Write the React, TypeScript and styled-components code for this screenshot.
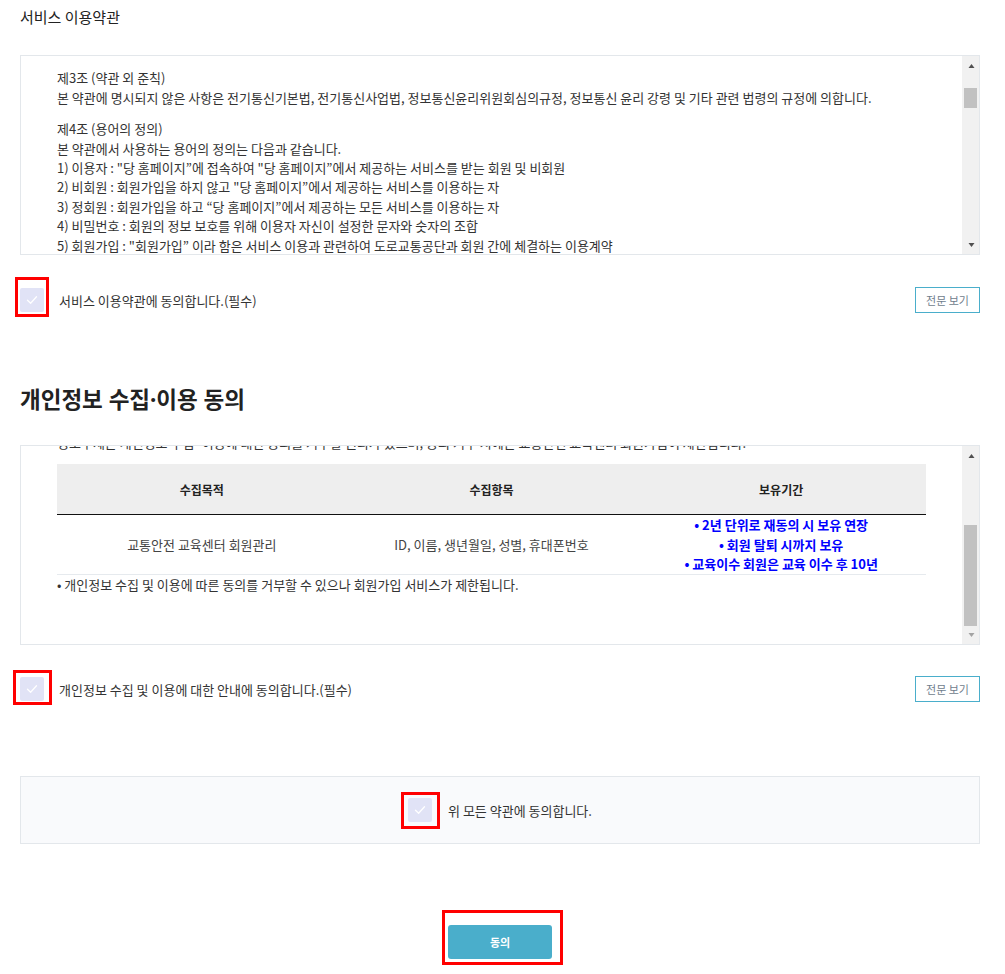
import React, { useLayoutEffect, useRef, useState } from "react";
import styled, { createGlobalStyle } from "styled-components";

const GlobalStyle = createGlobalStyle`
  html, body { margin: 0; padding: 0; background: #ffffff; }
  body {
    font-family: "Noto Sans CJK KR", "Noto Sans", sans-serif;
    color: #333333;
  }
`;

const Page = styled.main`
  width: 960px;
  padding: 5px 20px 20px;
  display: flex;
  flex-direction: column;
`;

const SectionTitle = styled.h2<{ $large?: boolean; $gap?: number }>`
  margin: ${(p) => p.$gap ?? 0}px 0 0;
  font-family: ${(p) => (p.$large ? '"Noto Sans", "Noto Sans CJK KR", sans-serif' : "inherit")};
  font-size: ${(p) => (p.$large ? "22.5px" : "15px")};
  font-weight: ${(p) => (p.$large ? 700 : 400)};
  line-height: ${(p) => (p.$large ? "30px" : "24px")};
  color: #222222;
`;

/* ---------- scroll panel with a drawn classic scrollbar ---------- */

const Frame = styled.div<{ $gap: number }>`
  margin-top: ${(p) => p.$gap}px;
  height: 200px;
  box-sizing: border-box;
  border: 1px solid #e3e7eb;
  display: flex;
`;

const Viewport = styled.div<{ $padBottom: number }>`
  flex: 1;
  min-width: 0;
  overflow: hidden;
  position: relative;
  padding: 12px 36px ${(p) => p.$padBottom}px;
  font-size: 13px;
  line-height: 19.4px;
  color: #333333;
`;

const Rail = styled.div`
  width: 17px;
  flex: none;
  background: #f1f1f1;
  display: flex;
  flex-direction: column;
`;

const RailButton = styled.div<{ $down?: boolean; $disabled?: boolean }>`
  height: 17px;
  flex: none;
  display: flex;
  align-items: center;
  justify-content: center;

  &::after {
    content: "";
    width: 0;
    height: 0;
    border-left: 3.5px solid transparent;
    border-right: 3.5px solid transparent;
    ${(p) => (p.$down ? "border-top" : "border-bottom")}: 4px solid ${(p) => (p.$disabled ? "#a3a3a3" : "#505050")};
    transform: translate(0.5px, ${(p) => (p.$down ? "-1px" : "1px")});
  }
`;

const Track = styled.div`
  flex: 1;
  position: relative;
`;

const Thumb = styled.div`
  position: absolute;
  left: 2px;
  right: 2px;
  background: #c1c1c1;
`;

type ThumbGeom = { top: number; height: number; atEnd: boolean };

const ScrollPanel: React.FC<{
  gap: number;
  padBottom: number;
  anchor: React.RefObject<HTMLElement | null>;
  anchorOffset: number;
  children: React.ReactNode;
}> = ({ gap, padBottom, anchor, anchorOffset, children }) => {
  const viewRef = useRef<HTMLDivElement>(null);
  const trackRef = useRef<HTMLDivElement>(null);
  const [thumb, setThumb] = useState<ThumbGeom>({ top: 0, height: 17, atEnd: false });

  useLayoutEffect(() => {
    const v = viewRef.current;
    const t = trackRef.current;
    if (!v || !t) return;
    if (anchor.current) v.scrollTop = anchor.current.offsetTop - anchorOffset;
    const track = t.clientHeight;
    const max = v.scrollHeight - v.clientHeight;
    const h = Math.max(17, Math.round((track * v.clientHeight) / v.scrollHeight));
    const top = max > 0 ? Math.round(((track - h) * v.scrollTop) / max) : 0;
    setThumb({ top, height: h, atEnd: v.scrollTop >= max - 1 });
  }, [anchor, anchorOffset]);

  return (
    <Frame $gap={gap}>
      <Viewport ref={viewRef} $padBottom={padBottom}>
        {children}
      </Viewport>
      <Rail>
        <RailButton />
        <Track ref={trackRef}>
          <Thumb style={{ top: thumb.top, height: thumb.height }} />
        </Track>
        <RailButton $down $disabled={thumb.atEnd} />
      </Rail>
    </Frame>
  );
};

/* ---------- content ---------- */

const Para = styled.p`
  margin: 0 0 12px;
`;

const Line = styled.span`
  display: block;
`;

const AgreeRow = styled.div<{ $gap: number }>`
  margin-top: ${(p) => p.$gap}px;
  height: 26px;
  display: flex;
  align-items: center;
  justify-content: space-between;
`;

const CheckGroup = styled.label`
  display: flex;
  align-items: center;
  gap: 15px;
  font-size: 13px;
  color: #333333;
  cursor: pointer;
`;

const CheckBox = styled.span`
  position: relative;
  width: 24px;
  height: 24px;
  border-radius: 2px;
  background: #e1e3f6;
  display: flex;
  align-items: center;
  justify-content: center;
  flex: none;
`;

const Highlight = styled.span<{ $t: number; $r: number; $b: number; $l: number }>`
  position: absolute;
  top: ${(p) => -p.$t}px;
  right: ${(p) => -p.$r}px;
  bottom: ${(p) => -p.$b}px;
  left: ${(p) => -p.$l}px;
  border: 3px solid #ff0000;
  pointer-events: none;
`;

const ViewButton = styled.button`
  width: 65px;
  height: 26px;
  box-sizing: border-box;
  border: 1px solid #4aaecb;
  background: #ffffff;
  color: #6f7d8c;
  font-family: inherit;
  font-size: 11px;
  padding: 0;
  cursor: pointer;
`;

const Table = styled.table`
  width: 100%;
  margin-top: 12px;
  border-collapse: collapse;
  table-layout: fixed;
`;

const Th = styled.th`
  height: 50px;
  padding: 0;
  background: #eeeeee;
  border-bottom: 1px solid #111111;
  font-size: 12px;
  font-weight: 700;
  color: #222222;
  text-align: center;
`;

const Td = styled.td<{ $blue?: boolean }>`
  padding: 0;
  height: 58px;
  text-align: center;
  border-bottom: 1px solid #e6eaee;
  font-size: 13px;
  line-height: 19.4px;
  font-weight: ${(p) => (p.$blue ? 700 : 400)};
  color: ${(p) => (p.$blue ? "#0000ff" : "#444444")};
`;

const Note = styled.p`
  margin: 0;
`;

const AllAgreeBox = styled.div`
  margin-top: 74px;
  height: 68px;
  box-sizing: border-box;
  border: 1px solid #e3e7eb;
  background: #f9fafc;
  display: flex;
  align-items: center;
  justify-content: center;
`;

const AllAgreeGroup = styled(CheckGroup)`
  gap: 16px;
`;

const SubmitWrap = styled.div`
  margin-top: 81px;
  align-self: center;
  position: relative;
`;

const SubmitButton = styled.button`
  width: 104px;
  height: 34px;
  border: none;
  border-radius: 3px;
  background: #4aaecb;
  color: #ffffff;
  font-family: inherit;
  font-size: 11px;
  font-weight: 700;
  padding: 0;
  cursor: pointer;
  display: block;
`;

const Check = () => (
  <svg width="12" height="10" viewBox="0 0 12 10" fill="none">
    <path d="M1.5 5.2 L4.6 8.2 L10.5 1.8" stroke="#ffffff" strokeWidth="1.3" strokeLinecap="round" strokeLinejoin="round" />
  </svg>
);

type Inset = { t: number; r: number; b: number; l: number };

const Agree: React.FC<{ hl: Inset; children: React.ReactNode; all?: boolean }> = ({ hl, children, all }) => {
  const Group = all ? AllAgreeGroup : CheckGroup;
  return (
    <Group>
      <CheckBox>
        <Check />
        <Highlight $t={hl.t} $r={hl.r} $b={hl.b} $l={hl.l} />
      </CheckBox>
      <span>{children}</span>
    </Group>
  );
};

type Article = { title: string; lines: string[] };

const termsBefore: Article[] = [
  {
    title: "제1조 (목적)",
    lines: [
      '이 약관은 도로교통공단(이하 "공단"이라 한다)이 운영하는 교통안전 교육센터 홈페이지(이하 "당 홈페이지"라 한다)에서',
      "제공하는 서비스의 이용조건 및 절차에 관한 사항을 규정함을 목적으로 합니다.",
    ],
  },
  {
    title: "제2조 (약관의 효력 및 변경)",
    lines: [
      "1) 이 약관은 서비스 화면에 게시하거나 기타의 방법으로 이용자에게 공지함으로써 효력을 발생합니다.",
      "2) 당 홈페이지는 합리적인 사유가 발생할 경우 관련 법령에 위배되지 않는 범위 안에서 이 약관을 변경할 수 있습니다.",
    ],
  },
];

const termsAfter: Article[] = [
  {
    title: "제3조 (약관 외 준칙)",
    lines: [
      "본 약관에 명시되지 않은 사항은 전기통신기본법, 전기통신사업법, 정보통신윤리위원회심의규정, 정보통신 윤리 강령 및 기타 관련 법령의 규정에 의합니다.",
    ],
  },
  {
    title: "제4조 (용어의 정의)",
    lines: [
      "본 약관에서 사용하는 용어의 정의는 다음과 같습니다.",
      '1) 이용자 : "당 홈페이지”에 접속하여 "당 홈페이지”에서 제공하는 서비스를 받는 회원 및 비회원',
      '2) 비회원 : 회원가입을 하지 않고 "당 홈페이지”에서 제공하는 서비스를 이용하는 자',
      "3) 정회원 : 회원가입을 하고 “당 홈페이지”에서 제공하는 모든 서비스를 이용하는 자",
      "4) 비밀번호 : 회원의 정보 보호를 위해 이용자 자신이 설정한 문자와 숫자의 조합",
      '5) 회원가입 : "회원가입” 이라 함은 서비스 이용과 관련하여 도로교통공단과 회원 간에 체결하는 이용계약',
      '6) 회원탈퇴 : "회원탈퇴”라 함은 회원이 이용계약을 종료시키는 의사표시를 말합니다.',
    ],
  },
  {
    title: "제5조 (이용계약의 성립)",
    lines: [
      "1) 이용계약은 이용자의 이용신청에 대한 당 홈페이지의 승낙과 이용자의 약관 내용에 대한 동의로 성립됩니다.",
      "2) 회원가입은 이용자가 약관의 내용에 대하여 동의를 하고 회원가입신청을 한 후 당 홈페이지가 이를 승낙함으로써 성립합니다.",
    ],
  },
  {
    title: "제6조 (이용신청)",
    lines: [
      "1) 회원가입은 온라인으로 가입신청 양식에 기록하여 가입을 하여야 합니다.",
      "2) 가입신청 양식에 기재하는 모든 회원 정보는 실제 데이터인 것으로 간주하며, 실명이나 실제 정보를 입력하지 않은 회원은",
      "법적인 보호를 받을 수 없습니다.",
      "3) 타인의 명의를 도용하여 이용신청을 한 회원의 모든 ID는 삭제되며, 관계 법령에 따라 처벌을 받을 수 있습니다.",
    ],
  },
  {
    title: "제7조 (이용신청의 승낙)",
    lines: [
      "1) 당 홈페이지는 이용자가 모든 사항을 정확히 기재하여 이용신청을 하였을 경우 특별한 사정이 없는 한 승낙합니다.",
      "2) 당 홈페이지는 다음 각 호에 해당하는 경우 이용신청에 대한 승낙을 제한하거나 사후에 이용계약을 해지할 수 있습니다.",
      "가. 본인의 실명으로 신청하지 않은 경우",
      "나. 다른 사람의 명의를 사용하여 신청한 경우",
      "다. 이용신청서의 내용을 허위로 기재한 경우",
      "라. 사회의 안녕 질서 또는 미풍양속을 저해할 목적으로 신청한 경우",
    ],
  },
  {
    title: "제8조 (계약사항의 변경)",
    lines: [
      "회원은 개인정보관리를 통해 언제든지 자신의 정보를 열람하고 수정할 수 있습니다.",
      "회원은 이용신청 시 기재한 사항이 변경되었을 경우 온라인으로 수정을 해야 합니다.",
    ],
  },
  {
    title: "제9조 (회원정보 보호)",
    lines: [
      "1) 당 홈페이지는 이용자의 정보수집 시 서비스 제공에 필요한 최소한의 정보를 수집합니다.",
      "2) 제공된 개인정보는 당해 이용자의 동의 없이 목적 외의 이용이나 제3자에게 제공할 수 없습니다.",
      "3) 이용자는 언제든지 당 홈페이지가 가지고 있는 자신의 개인정보에 대해 열람 및 오류정정을 요구할 수 있습니다.",
    ],
  },
  {
    title: "제10조 (서비스의 이용시간)",
    lines: [
      "1) 서비스의 이용은 업무상 또는 기술상 특별한 지장이 없는 한 연중무휴, 1일 24시간을 원칙으로 합니다.",
      "2) 당 홈페이지는 시스템 정기점검, 증설 및 교체를 위해 서비스를 일시적으로 중단할 수 있습니다.",
    ],
  },
  {
    title: "제11조 (회원의 의무)",
    lines: [
      "1) 회원은 관계법령, 본 약관의 규정, 이용안내 및 주의사항 등 당 홈페이지가 통지하는 사항을 준수하여야 합니다.",
      "2) 회원은 ID와 비밀번호에 관한 모든 관리책임을 가지며, 이를 제3자에게 이용하게 해서는 안 됩니다.",
      "3) 회원은 자신의 ID가 부정하게 사용된 경우 즉시 당 홈페이지에 그 사실을 통보하여야 합니다.",
    ],
  },
  {
    title: "제12조 (공단의 의무)",
    lines: [
      "1) 공단은 법령과 본 약관이 금지하는 행위를 하지 않으며, 지속적이고 안정적으로 서비스를 제공하기 위해 노력합니다.",
      "2) 공단은 회원의 개인정보 보호를 위해 보안시스템을 갖추며 개인정보처리방침을 공시하고 준수합니다.",
    ],
  },
  {
    title: "제13조 (서비스 이용의 제한)",
    lines: [
      "당 홈페이지는 회원이 다음 각 호에 해당하는 행위를 하였을 경우 사전 통지 없이 서비스 이용을 제한할 수 있습니다.",
      "1) 다른 회원의 ID를 부정하게 사용하는 행위",
      "2) 공공질서 및 미풍양속에 위반되는 내용을 유포하는 행위",
      "3) 범죄적 행위에 결부된다고 판단되는 행위",
      "4) 기타 관계 법령에 위배되는 행위",
    ],
  },
  {
    title: "제14조 (게시물의 관리)",
    lines: [
      "당 홈페이지는 회원이 게시하거나 등록한 내용이 다음 각 호에 해당한다고 판단되는 경우 사전 통지 없이 삭제할 수 있습니다.",
      "1) 다른 회원 또는 제3자를 비방하거나 명예를 손상시키는 내용인 경우",
      "2) 공공질서 및 미풍양속에 위반되는 내용인 경우",
      "3) 제3자의 저작권 등 기타 권리를 침해하는 내용인 경우",
    ],
  },
  {
    title: "제15조 (계약 해지 및 이용 제한)",
    lines: [
      "1) 회원이 이용계약을 해지하고자 하는 때에는 회원 본인이 온라인을 통하여 해지 신청을 하여야 합니다.",
      "2) 회원 탈퇴 시 관련 법령 및 개인정보처리방침에 따라 보유하는 정보를 제외한 회원의 정보는 삭제됩니다.",
    ],
  },
  {
    title: "제16조 (면책조항)",
    lines: [
      "1) 공단은 천재지변 또는 이에 준하는 불가항력으로 인하여 서비스를 제공할 수 없는 경우에는 책임이 면제됩니다.",
      "2) 공단은 회원의 귀책사유로 인한 서비스 이용의 장애에 대하여 책임을 지지 않습니다.",
    ],
  },
  {
    title: "제17조 (분쟁의 해결)",
    lines: [
      "서비스 이용으로 발생한 분쟁에 대해 소송이 제기될 경우 공단의 소재지를 관할하는 법원을 관할 법원으로 합니다.",
    ],
  },
  {
    title: "부칙",
    lines: ["이 약관은 공지한 날로부터 시행합니다."],
  },
];

const renderArticles = (list: Article[], firstRef?: React.Ref<HTMLParagraphElement>) =>
  list.map((t, i) => (
    <Para key={t.title} ref={i === 0 ? firstRef : undefined}>
      <Line>{t.title}</Line>
      {t.lines.map((l) => (
        <Line key={l}>{l}</Line>
      ))}
    </Para>
  ));

export default function App() {
  const startRef = useRef<HTMLParagraphElement>(null);
  const tableRef = useRef<HTMLTableElement>(null);

  return (
    <>
      <GlobalStyle />
      <Page>
        <SectionTitle>서비스 이용약관</SectionTitle>
        <ScrollPanel gap={26} padBottom={20} anchor={startRef} anchorOffset={12}>
          {renderArticles(termsBefore)}
          {renderArticles(termsAfter, startRef)}
        </ScrollPanel>
        <AgreeRow $gap={32}>
          <Agree hl={{ t: 11, r: 5, b: 5, l: 5 }}>서비스 이용약관에 동의합니다.(필수)</Agree>
          <ViewButton type="button">전문 보기</ViewButton>
        </AgreeRow>

        <SectionTitle $large $gap={72}>개인정보 수집·이용 동의</SectionTitle>
        <ScrollPanel gap={30} padBottom={51} anchor={tableRef} anchorOffset={18}>
          <Note>
            도로교통공단 교통안전 교육센터는 「개인정보 보호법」 제15조 및 제22조에 따라 회원가입, 교육 신청 및 수료 관리 등의
            서비스 제공을 위하여 아래와 같이 개인정보를 수집·이용합니다.
          </Note>
          <Note>
            수집된 개인정보는 아래의 수집 목적 이외의 용도로는 이용되지 않으며, 이용 목적이 변경될 경우에는 「개인정보 보호법」
            제18조에 따라 별도의 동의를 받는 등 필요한 조치를 이행할 예정입니다.
          </Note>
          <Note>
            공단은 수집한 개인정보를 안전하게 관리하기 위하여 관리적·기술적·물리적 보호조치를 취하고 있으며, 보유기간이 경과한
            개인정보는 지체 없이 파기합니다.
          </Note>
          <Note>
            정보주체는 개인정보 수집·이용에 대한 동의를 거부할 권리가 있으며, 동의 거부 시에는 교통안전 교육센터 회원가입이 제한됩니다.
          </Note>
          <Table ref={tableRef}>
            <thead>
              <tr>
                <Th>수집목적</Th>
                <Th>수집항목</Th>
                <Th>보유기간</Th>
              </tr>
            </thead>
            <tbody>
              <tr>
                <Td>교통안전 교육센터 회원관리</Td>
                <Td>ID, 이름, 생년월일, 성별, 휴대폰번호</Td>
                <Td $blue>
                  • 2년 단위로 재동의 시 보유 연장
                  <br />• 회원 탈퇴 시까지 보유
                  <br />• 교육이수 회원은 교육 이수 후 10년
                </Td>
              </tr>
            </tbody>
          </Table>
          <Note>• 개인정보 수집 및 이용에 따른 동의를 거부할 수 있으나 회원가입 서비스가 제한됩니다.</Note>
        </ScrollPanel>
        <AgreeRow $gap={31}>
          <Agree hl={{ t: 7, r: 8, b: 4, l: 7 }}>개인정보 수집 및 이용에 대한 안내에 동의합니다.(필수)</Agree>
          <ViewButton type="button">전문 보기</ViewButton>
        </AgreeRow>

        <AllAgreeBox>
          <Agree all hl={{ t: 6, r: 8, b: 7, l: 7 }}>위 모든 약관에 동의합니다.</Agree>
        </AllAgreeBox>

        <SubmitWrap>
          <SubmitButton type="button">동의</SubmitButton>
          <Highlight $t={15} $r={11} $b={6} $l={6} />
        </SubmitWrap>
      </Page>
    </>
  );
}
